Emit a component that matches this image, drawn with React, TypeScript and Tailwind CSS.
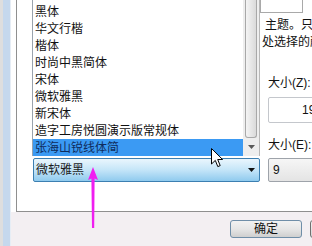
import React from "react";

const FONT = "font-['Liberation_Sans','Noto_Sans_CJK_SC',sans-serif]";

const ITEMS = [
  "仿宋",
  "黑体",
  "华文行楷",
  "楷体",
  "时尚中黑简体",
  "宋体",
  "微软雅黑",
  "新宋体",
  "造字工房悦圆演示版常规体",
  "张海山锐线体简",
];

const FontList: React.FC = () => (
  <div className="absolute left-[32px] top-[-14px] w-[228px] h-[170px] flex bg-white border-l border-[#9aa3ad]">
    <div className="flex-1 flex flex-col">
      {ITEMS.map((name, i) =>
        i === ITEMS.length - 1 ? (
          <div
            key={name}
            className="h-[17px] pl-[2px] pt-[2px] leading-[15px] text-[12px] text-[#0f2c5c] bg-[#3b9af3] whitespace-nowrap"
          >
            {name}
          </div>
        ) : (
          <div
            key={name}
            className="h-[17px] pl-[2px] pt-[2px] leading-[15px] text-[12px] text-[#111] whitespace-nowrap"
          >
            {name}
          </div>
        )
      )}
    </div>
    <div className="w-[17px] flex flex-col bg-[#eeeeee] border-r border-[#b8b8b8]">
      <div className="h-[152px] mx-[2px] rounded-b-[3px] border border-t-0 border-[#a8a8a8] bg-gradient-to-r from-[#f4f4f4] to-[#dadada]" />
      <div className="flex-1 flex items-center justify-center">
        <svg width="7" height="4" viewBox="0 0 7 4">
          <path d="M0 0 H7 L3.5 4 Z" fill="#5a5a5a" />
        </svg>
      </div>
    </div>
  </div>
);

const Cursor: React.FC = () => (
  <svg
    className="absolute left-[211px] top-[148px]"
    width="13"
    height="20"
    viewBox="0 0 13 20"
  >
    <path
      d="M0.5 0.5 L0.5 16 L4.3 12.4 L6.8 18.6 L9.2 17.6 L6.7 11.5 L11.6 11.5 Z"
      fill="#fff"
      stroke="#000"
      strokeWidth="1"
      strokeLinejoin="miter"
    />
  </svg>
);

const MagentaArrow: React.FC = () => (
  <svg
    className="absolute left-[87px] top-[167px]"
    width="12"
    height="62"
    viewBox="0 0 12 62"
  >
    <path d="M6 0 L11 13 L7.6 11.5 L7.2 61 L5 61 L4.4 11.5 L1 13 Z" fill="#f01ef0" />
  </svg>
);

export default function App() {
  return (
    <div className={`relative w-[312px] h-[246px] overflow-hidden flex bg-white ${FONT}`}>
      <div className="shrink-0 w-[3px] bg-[#dedede]" />
      <div className="shrink-0 w-[7px] bg-[#c5d8ed]" />
      <div className="shrink-0 w-[1px] bg-[#e6edf5]" />
      <div className="flex-1 min-w-0 flex flex-col">
        <div className="h-[212px] flex bg-white">
          <div className="shrink-0 w-[5px]" />
          <div className="flex-1 min-w-0 flex border-l border-b border-[#8f8f8f]">
            <div className="shrink-0 w-[243px] pl-[16px] pt-[158px]">
              <div className="h-[24px] w-[227px] flex items-center justify-between rounded-[2px] border border-[#3c7fb1] bg-gradient-to-b from-[#eaf6fd] via-[#c4e5f8] to-[#8fcaee] pl-[2px] pr-[4px]">
                <span className="text-[12px] text-[#1b1b1b]">微软雅黑</span>
                <svg width="7" height="4" viewBox="0 0 7 4">
                  <path d="M0 0 H7 L3.5 4 Z" fill="#111" />
                </svg>
              </div>
            </div>
            <div className="flex-1 min-w-0 flex flex-col overflow-hidden">
              <div className="shrink-0 h-[13px] w-[43px] border border-t-0 border-[#a9a9a9] bg-white" />
              <div className="mt-[4px] text-[12px] leading-[17px] text-[#111] whitespace-nowrap">
                <p className="pl-[5px]">主题。只</p>
                <p className="pl-[2px]">处选择的颜</p>
              </div>
              <p className="mt-[24px] pl-[8px] text-[12px] leading-[16px] text-[#111] whitespace-nowrap">
                大小(Z):
              </p>
              <div className="mt-[6px] ml-[8px] h-[26px] w-[80px] shrink-0 rounded-[2px] border border-[#c4c7cc] bg-white pl-[33px] text-[12px] leading-[24px] text-[#111]">
                19
              </div>
              <p className="mt-[14px] pl-[8px] text-[12px] leading-[16px] text-[#111] whitespace-nowrap">
                大小(E):
              </p>
              <div className="mt-[5px] ml-[8px] h-[24px] w-[80px] shrink-0 rounded-[2px] border border-[#9ea3aa] bg-gradient-to-b from-[#f6f6f6] to-[#e4e4e4] pl-[4px] text-[12px] leading-[22px] text-[#111]">
                9
              </div>
            </div>
          </div>
        </div>
        <div className="flex-1 flex items-start gap-[8px] pl-[219px] pt-[8px] bg-[#f3eff2] overflow-hidden">
          <div className="shrink-0 w-[72px] h-[18px] rounded-[3px] border border-[#6f8ea8] bg-gradient-to-b from-[#f2f2f2] via-[#e6e6e6] to-[#cfcfcf] flex items-center justify-center text-[12px] text-[#111]">
            确定
          </div>
          <div className="shrink-0 w-[72px] h-[18px] rounded-[3px] border border-[#707070] bg-gradient-to-b from-[#f2f2f2] to-[#d5d5d5]" />
        </div>
      </div>
      <FontList />
      <Cursor />
      <MagentaArrow />
    </div>
  );
}
